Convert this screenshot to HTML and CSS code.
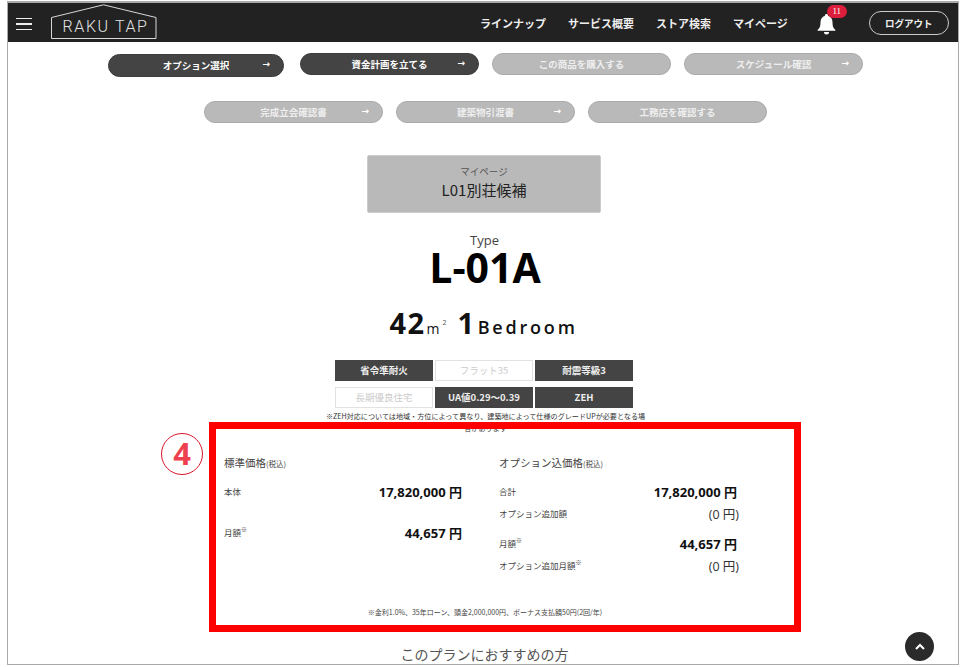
FILE: index.html
```html
<!DOCTYPE html>
<html lang="ja">
<head>
<meta charset="utf-8">
<title>RAKU TAP</title>
<link rel="stylesheet" href="styles.css">
</head>
<body>
<div class="frame">
  <header class="header">
    <div class="burger"><span></span><span></span><span></span></div>
    <div class="logo">
      <svg class="logo-house" width="106" height="35" viewBox="0 0 106 35" fill="none"><path d="M.5 34.5V13.5L52.500 .8 105 13.500V34.500H.5Z" stroke="#d8d8d8" stroke-width="1"/></svg>
      <span class="logo-text">RAKU TAP</span>
    </div>
    <nav class="nav">
      <a>ラインナップ</a><a>サービス概要</a><a>ストア検索</a><a>マイページ</a>
    </nav>
    <div class="bell">
      <svg width="19" height="21" viewBox="0 0 19 21"><path d="M9.500 0a1.500 1.500 0 0 1 1.500 1.700C14 2.500 15.500 5 15.500 8.500c0 4 .8 5.500 2.800 7.300v1H.7v-1c2-1.800 2.800-3.300 2.800-7.300C3.500 5 5 2.500 8 1.700A1.500 1.500 0 0 1 9.500 0ZM7 18h5a2.500 2.500 0 0 1-5 0Z" fill="#fff"/></svg>
      <span class="bell-count">11</span>
    </div>
    <a class="logout">ログアウト</a>
  </header>
  <main class="main">
    <div class="btn-row first">
      <a class="btn dark wide">オプション選択<i>→</i></a>
      <a class="btn dark">資金計画を立てる<i>→</i></a>
      <a class="btn">この商品を購入する</a>
      <a class="btn">スケジュール確認<i>→</i></a>
    </div>
    <div class="btn-row second">
      <a class="btn">完成立会確認書<i>→</i></a>
      <a class="btn">建築物引渡書<i>→</i></a>
      <a class="btn">工務店を確認する</a>
    </div>
    <div class="card">
      <div class="card-sub">マイページ</div>
      <div class="card-title">L01別荘候補</div>
    </div>
    <div class="type">Type</div>
    <h1 class="model">L-01A</h1>
    <div class="spec"><b>42</b><span class="unit">m</span><sup>2</sup><b class="bed-n">1</b><span class="bed">Bedroom</span></div>
    <div class="tags">
      <span class="tag on">省令準耐火</span>
      <span class="tag">フラット35</span>
      <span class="tag on">耐震等級3</span>
      <span class="tag">長期優良住宅</span>
      <span class="tag on">UA値0.29～0.39</span>
      <span class="tag on">ZEH</span>
    </div>
    <p class="note">※ZEH対応については地域・方位によって異なり、建築地によって仕様のグレードUPが必要となる場合があります</p>
    <section class="prices">
      <div class="price-grid">
        <div class="col">
          <div class="head">標準価格<small>(税込)</small></div>
          <div class="row r-total"><span>本体</span><b>17,820,000 円</b></div>
          <div class="row r-month"><span>月額<sup>※</sup></span><b>44,657 円</b></div>
        </div>
        <div class="col">
          <div class="head">オプション込価格<small>(税込)</small></div>
          <div class="row r-total"><span>合計</span><b>17,820,000 円</b></div>
          <div class="row r-add"><span>オプション追加額</span><em>(0 円)</em></div>
          <div class="row r-month2"><span>月額<sup>※</sup></span><b>44,657 円</b></div>
          <div class="row r-add"><span>オプション追加月額<sup>※</sup></span><em>(0 円)</em></div>
        </div>
      </div>
      <p class="foot">※金利1.0%、35年ローン、頭金2,000,000円、ボーナス支払額50円(2回/年)</p>
      <div class="mark"></div>
      <div class="mark-num">4</div>
    </section>
    <h2 class="rec">このプランにおすすめの方</h2>
  </main>
  <a class="to-top"><svg width="12" height="8" viewBox="0 0 12 8" fill="none"><path d="M2 6l4-4 4 4" stroke="#fff" stroke-width="2"/></svg></a>
</div>
</body>
</html>
```
FILE: styles.css
```css
* { box-sizing: border-box; }
html, body { margin: 0; padding: 0; background: #fff; }
body { font-family: "Noto Sans CJK JP", "Noto Sans", sans-serif; color: #333; overflow: hidden; }
.frame {
  position: relative;
  width: 952px;
  height: 664px;
  margin: 1px 0 0 7px;
  border: 1px solid #aaa;
  border-top-width: 2px;
  overflow: hidden;
}
.header {
  height: 39px;
  background: #222;
  display: flex;
  align-items: center;
  color: #fff;
}
.burger { width: 16px; margin: 3px 0 0 8px; display: flex; flex-direction: column; gap: 4px; }
.burger span { height: 1.500px; background: #eee; display: block; }
.logo { position: relative; margin-left: 19px; width: 106px; height: 35px; align-self: flex-start; margin-top: 1px; display: flex; align-items: flex-end; justify-content: center; padding-left: 3px; }
.logo-house { position: absolute; left: 0; top: 0; }
.logo-text { position: relative; font-family: "Roboto", sans-serif; font-weight: 300; font-size: 16px; line-height: 24px; letter-spacing: 1.600px; color: #e4e4e4; white-space: nowrap; }
.nav { display: flex; margin: 1px 0 0 323px; gap: 22px; }
.nav a { font-size: 11px; font-weight: 700; line-height: 16px; color: #eee; white-space: nowrap; }
.bell { position: relative; margin-left: 29px; width: 19px; height: 21px; margin-top: 3px; }
.bell svg { display: block; }
.bell-count { position: absolute; left: 10px; top: -9px; width: 20px; height: 13px; border-radius: 7px; background: #dc1e3c; color: #fff; font-family: "Liberation Serif", serif; font-size: 9px; line-height: 13px; text-align: center; }
.logout { margin-left: 33px; width: 80px; height: 24px; border: 1px solid #ccc; border-radius: 12px; font-size: 9.500px; font-weight: 700; line-height: 22px; text-align: center; color: #eee; }

.main { padding-left: 5px; display: flex; flex-direction: column; align-items: center; }
.btn-row { display: flex; gap: 13px; align-items: center; }
.btn-row.first { margin-top: 11px; height: 22px; }
.btn-row.second { margin-top: 26px; height: 22px; }
.btn {
  position: relative;
  width: 179px;
  height: 22px;
  border-radius: 11px;
  background: #b9b9b9;
  border: 1px solid #aaa;
  color: #eee;
  font-size: 9.500px;
  font-weight: 700;
  line-height: 20px;
  text-align: center;
  white-space: nowrap;
}
.btn.dark { background: #444; color: #fff; border-color: #3c3c3c; }
.btn.wide { width: 176px; height: 23px; margin-right: 3px; margin-top: 2px; border-radius: 12px; line-height: 21px; }
.btn i { position: absolute; right: 13px; top: -1px; font-style: normal; font-family: "DejaVu Sans", sans-serif; font-weight: 700; font-size: 9px; color: #fff; }
.card { margin-top: 32px; margin-left: -3px; width: 234px; height: 58px; background: #b9b9b9; border: 1px solid #ccc; border-radius: 2px; text-align: center; padding-top: 9px; }
.card-sub { font-size: 9.500px; line-height: 13px; color: #555; }
.card-title { font-size: 15px; line-height: 22px; color: #222; margin-top: 1px; }
.type { margin-top: 20px; margin-left: -2px; font-family: "Open Sans", sans-serif; font-size: 13px; line-height: 14px; color: #444; }
.model { margin: 2px 0 0 -1px; font-family: "Open Sans", sans-serif; font-size: 41px; font-weight: 700; line-height: 36px; color: #000; }
.spec { margin: 23px 0 0 -4px; height: 30px; display: flex; align-items: baseline; font-family: "Open Sans", sans-serif; color: #111; line-height: 30px; white-space: nowrap; }
.spec b { font-size: 29px; font-weight: 700; letter-spacing: 1.500px; }
.spec .unit { font-size: 14px; margin-left: 1px; }
.spec sup { font-size: 7px; line-height: 0; margin-left: 3px; position: relative; top: -9px; vertical-align: baseline; color: #555; }
.spec .bed-n { margin-left: 11px; }
.spec .bed { font-size: 18px; font-weight: 600; letter-spacing: 2.800px; margin-left: 2px; }
.tags { margin-top: 22px; margin-left: -3px; display: grid; grid-template-columns: 98px 98px 98px; column-gap: 2px; row-gap: 6px; }
.tag { height: 21px; border: 1.500px solid #e2e2e2; color: #ccc; font-size: 9.500px; line-height: 18px; text-align: center; white-space: nowrap; }
.tag.on { background: #444; border-color: #444; color: #eee; font-weight: 700; }
.note { margin: 2px 0 0; width: 322px; height: 12px; font-size: 7.100px; line-height: 12px; color: #333; text-align: center; }
.prices { position: relative; align-self: flex-start; margin: 0 0 0 196px; width: 592px; height: 210px; padding: 34px 55px 0 15px; }
.mark { position: absolute; inset: 0; border: 7px solid #fe0000; }
.mark-num { position: absolute; left: -48px; top: 11px; width: 42px; height: 42px; border: 1.500px solid #d8172c; border-radius: 50%; color: #ef4050; font-family: "Open Sans", sans-serif; font-size: 31px; font-weight: 700; line-height: 38px; text-align: center; }
.price-grid { display: grid; grid-template-columns: 238px 238px; column-gap: 37px; height: 119px; }
.col { display: flex; flex-direction: column; }
.head { height: 14px; font-size: 10.500px; line-height: 14px; color: #444; white-space: nowrap; }
.head small { font-size: 7.500px; }
.row { display: flex; justify-content: space-between; align-items: center; height: 18px; font-size: 8.500px; color: #444; white-space: nowrap; }
.row b { font-family: "Open Sans", "Noto Sans CJK JP", sans-serif; font-size: 13px; font-weight: 700; color: #111; }
.row em { font-family: "Open Sans", "Noto Sans CJK JP", sans-serif; font-style: normal; font-size: 12.500px; color: #333; margin-right: -2px; }
.row sup { font-size: 6px; line-height: 0; color: #333; }
.r-total { margin-top: 12px; }
.r-month { margin-top: 23px; }
.r-add { margin-top: 4px; }
.r-month2 { margin-top: 12px; }
.foot { margin: 32px 0 0; font-size: 7px; line-height: 10px; color: #444; text-align: center; }
.rec { margin: 14px 0 0 -2px; font-size: 14px; font-weight: 400; line-height: 16px; color: #555; }
.to-top { position: absolute; left: 897px; top: 629px; width: 29px; height: 29px; border-radius: 50%; background: #2a2a2a; display: flex; align-items: center; justify-content: center; }
```
